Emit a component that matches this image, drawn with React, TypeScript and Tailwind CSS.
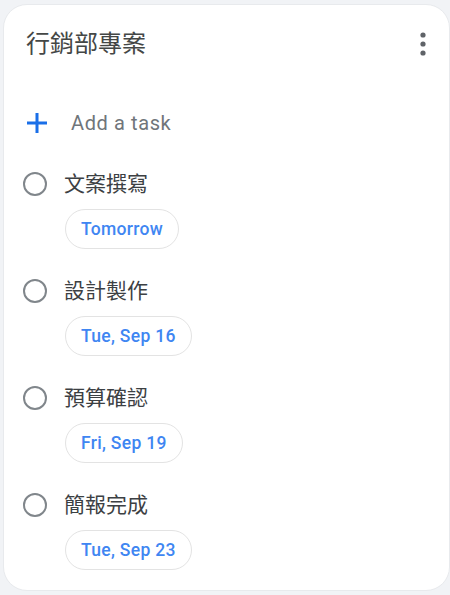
import React from "react";

/* ------------------------------------------------------------------ */
/* Data                                                               */
interface Task {
  title: string;
  due: string;
}

const tasks: Task[] = [
  { title: "文案撰寫", due: "Tomorrow" },
  { title: "設計製作", due: "Tue, Sep 16" },
  { title: "預算確認", due: "Fri, Sep 19" },
  { title: "簡報完成", due: "Tue, Sep 23" },
];

const FONT = {
  fontFamily: '"Roboto", "Noto Sans CJK TC", sans-serif',
};

/* ------------------------------------------------------------------ */
/* Task row                                                           */
const TaskItem: React.FC<{ task: Task }> = ({ task }) => (
  <div className="flex flex-col h-[107px]">
    <div className="flex items-center h-[28px]">
      <div className="w-[60px] flex justify-center pl-[2px]">
        <div className="w-[24px] h-[24px] rounded-full border-[2.5px] border-[#80868b]" />
      </div>
      <span className="text-[21px] leading-[28px] text-[#3c4043]">{task.title}</span>
    </div>
    <div className="pl-[61px] mt-[11px]">
      <span className="inline-flex items-center h-[40px] px-[15px] rounded-full border border-[#e3e3e3] text-[17.5px] font-medium text-[#3f86f2] tracking-[0.3px]">
        {task.due}
      </span>
    </div>
  </div>
);

/* ------------------------------------------------------------------ */
/* Main component                                                     */
export default function App() {
  return (
    <div className="w-[450px] h-[595px] bg-[#f1f3f6] pt-[4px] pl-[3px] overflow-hidden" style={FONT}>
      <div className="w-[447px] h-[587px] bg-white rounded-[24px] border border-[#e8eaed] flex flex-col">
        {/* header */}
        <div className="flex items-center justify-between h-[32px] mt-[23px] pl-[22px] pr-[16px]">
          <h1 className="text-[24px] leading-[32px] text-[#444746]">行銷部專案</h1>
          <svg width="20" height="28" viewBox="0 0 20 28">
            <circle cx="10" cy="5" r="2.6" fill="#5f6368" />
            <circle cx="10" cy="14" r="2.6" fill="#5f6368" />
            <circle cx="10" cy="23" r="2.6" fill="#5f6368" />
          </svg>
        </div>

        {/* add a task */}
        <div className="flex items-center h-[32px] mt-[49px]">
          <div className="w-[67px] flex justify-center pr-[2px]">
            <svg width="22" height="22" viewBox="0 0 22 22">
              <path d="M11 1v20M1 11h20" stroke="#1a6fe8" strokeWidth="3" />
            </svg>
          </div>
          <span className="text-[20px] leading-[28px] text-[#70757a] tracking-[0.6px]">Add a task</span>
        </div>

        {/* tasks */}
        <div className="flex flex-col mt-[33px]">
          {tasks.map((t) => (
            <TaskItem key={t.title} task={t} />
          ))}
        </div>
      </div>
    </div>
  );
}
